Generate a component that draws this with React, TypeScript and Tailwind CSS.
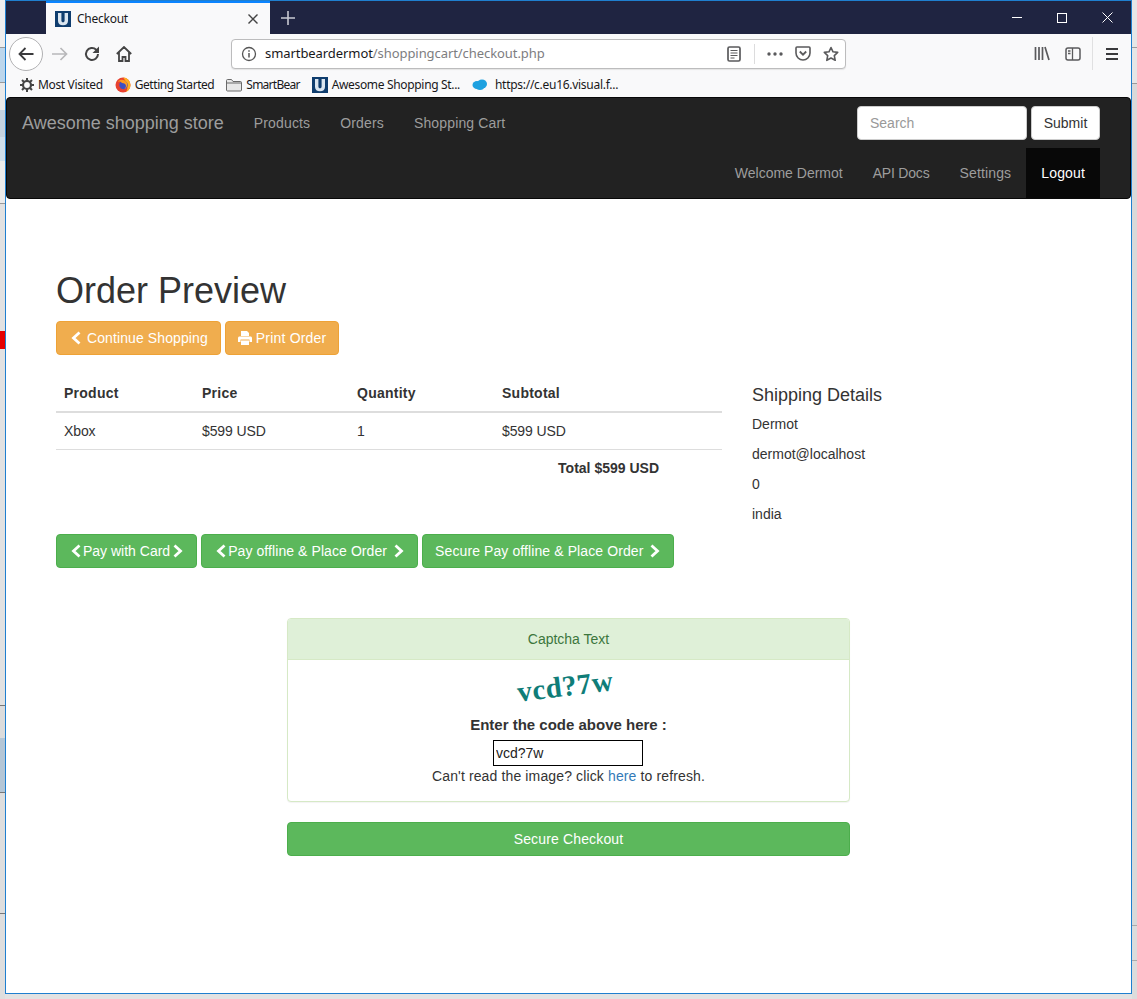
import type { ReactNode } from 'react';

const UI_FONT = 'font-["Noto_Sans",sans-serif]';

function Favicon() {
  return (
    <svg width="16" height="16" viewBox="0 0 16 16" className="shrink-0">
      <rect width="16" height="16" fill="#0f3d6e" />
      <path d="M3 2h3.4v7.5c0 1.2.6 1.8 1.6 1.8s1.6-.6 1.6-1.8V2H13v8c0 2.800-2 4.200-5 4.200S3 12.800 3 10z" fill="#dbe6f0" />
    </svg>
  );
}

function FirefoxIcon() {
  return (
    <svg width="16" height="16" viewBox="0 0 16 16" className="shrink-0">
      <circle cx="8" cy="8" r="7.500" fill="#e8412f" />
      <path d="M8 .5A7.500 7.500 0 0 1 15.500 8c0 3-2 6-4.500 7C14 11 12 5 8 .5z" fill="#ffb01f" />
      <circle cx="8.500" cy="8" r="4.200" fill="#3d4fc4" />
      <path d="M3 5c2-1 3 0 4 1 2 0 4 1 4 3s-2 4-5 4c3 0 7-2 6-7-1-3-5-4-7-3-1 .5-2 1-2 2z" fill="#ff9a1f" />
    </svg>
  );
}

function Chevron({ dir }: { dir: 'left' | 'right' }) {
  return (
    <svg width="14" height="14" viewBox="0 0 14 14" className="shrink-0">
      {dir === 'left' ? (
        <path d="M10.500 1.500 4.500 7l6 5.500" fill="none" stroke="#fff" strokeWidth="2.800" />
      ) : (
        <path d="M4.500 1.500 10.500 7l-6 5.500" fill="none" stroke="#fff" strokeWidth="2.800" />
      )}
    </svg>
  );
}

function PrinterIcon() {
  return (
    <svg width="14" height="14" viewBox="0 0 14 14" className="shrink-0">
      <path d="M3 0h6l2 2v3H3z" fill="#fff" />
      <path d="M1.500 5.500h11c.8 0 1.500.7 1.500 1.500v4h-2.500V8.500h-9V11H0V7c0-.8.7-1.500 1.500-1.500z" fill="#fff" />
      <rect x="3" y="9.500" width="8" height="4.500" fill="#fff" />
    </svg>
  );
}

function Btn({ color, children }: { color: 'orange' | 'green'; children: ReactNode }) {
  const tone =
    color === 'orange'
      ? 'bg-[#f0ad4e] border-[#eea236]'
      : 'bg-[#5cb85c] border-[#4cae4c]';
  return (
    <button className={`inline-flex h-[34px] items-center whitespace-nowrap rounded border px-3 text-sm text-white ${tone}`}>
      {children}
    </button>
  );
}

function Bookmark({ icon, label, className }: { icon: ReactNode; label: string; className: string }) {
  return (
    <div className="flex items-center gap-1 whitespace-nowrap">
      {icon}
      <span className={className}>{label}</span>
    </div>
  );
}

function Titlebar() {
  return (
    <div className="flex h-[33px] items-stretch bg-[#1f2441]">
      <div className="w-10" />
      <div className="flex w-[224px] items-center border-t-2 border-[#0a84ff] bg-[#f9f9fa] pl-[9px] pr-[11px] text-xs text-[#18181a]">
        <Favicon />
        <span className="ml-[6px] flex-1 tracking-[-0.25px]">Checkout</span>
        <svg width="12" height="12" viewBox="0 0 12 12">
          <path d="M1.500 1.500l9 9m0-9l-9 9" stroke="#444" strokeWidth="1.400" />
        </svg>
      </div>
      <div className="flex w-[35px] items-center justify-center">
        <svg width="14" height="14" viewBox="0 0 14 14">
          <path d="M7 0v14M0 7h14" stroke="#c8c9d2" strokeWidth="1.600" />
        </svg>
      </div>
      <div className="flex flex-1 items-center justify-end">
        <div className="flex w-[45px] justify-center">
          <div className="h-px w-[10px] bg-white" />
        </div>
        <div className="flex w-[45px] justify-center">
          <div className="size-[10px] border border-white" />
        </div>
        <div className="flex w-[47px] justify-center">
          <svg width="11" height="11" viewBox="0 0 11 11">
            <path d="M.5.5l10 10m0-10l-10 10" stroke="#fff" strokeWidth="1" />
          </svg>
        </div>
      </div>
    </div>
  );
}

function Toolbar() {
  return (
    <div className="flex h-[39px] items-center bg-[#f9f9fa] pl-[3px]">
      <div className="flex size-[34px] items-center justify-center rounded-full border border-[#b1b1b3] bg-white">
        <svg width="18" height="16" viewBox="0 0 18 16">
          <path d="M16.500 8H2.500M8.500 2l-6 6 6 6" fill="none" stroke="#3a3a3c" strokeWidth="1.800" />
        </svg>
      </div>
      <svg width="16" height="14" viewBox="0 0 16 14" className="ml-[9px]">
        <path d="M0 7h14M8.500 1l6 6-6 6" fill="none" stroke="#b8b8ba" strokeWidth="1.700" />
      </svg>
      <svg width="16" height="16" viewBox="0 0 16 16" className="ml-[16px]">
        <path d="M14 8a6 6 0 1 1-1.800-4.300L14 5.500" fill="none" stroke="#444" strokeWidth="2" />
        <path d="M15 .5V7H8.500z" fill="#444" />
      </svg>
      <svg width="16" height="16" viewBox="0 0 16 16" className="ml-[16px]">
        <path d="M.8 8 8 1l7.200 7M3 6.500V15h3.500v-4h3v4H13V6.500" fill="none" stroke="#444" strokeWidth="1.800" />
      </svg>
      <div className="ml-[99px] flex h-[30px] w-[615px] items-center rounded-sm border border-[#bcbcbd] bg-white pl-[9px] pr-[6px] shadow-[0_1px_1px_#e4e4e4]">
        <svg width="16" height="16" viewBox="0 0 16 16" className="shrink-0">
          <circle cx="8" cy="8" r="6.500" fill="none" stroke="#555" strokeWidth="1.300" />
          <path d="M8 7v4.500M8 4.200v1.500" stroke="#555" strokeWidth="1.500" />
        </svg>
        <div className="ml-[8px] flex-1 whitespace-nowrap text-[13px] tracking-[-0.07px]">
          <span className="text-[#18181a]">smartbeardermot</span>
          <span className="text-[#7d7d7f]">/shoppingcart/checkout.php</span>
        </div>
        <svg width="14" height="16" viewBox="0 0 14 16" className="shrink-0">
          <rect x="1" y="1" width="12" height="14" rx="1.500" fill="none" stroke="#5a5a5c" strokeWidth="1.700" />
          <path d="M3.500 4.500h7M3.500 7h7M3.500 9.500h7M3.500 12h4" stroke="#5a5a5c" strokeWidth="1" />
        </svg>
        <div className="ml-[13px] h-5 w-px bg-[#dcdcdd]" />
        <svg width="16" height="4" viewBox="0 0 16 4" className="ml-[12px] shrink-0">
          <circle cx="2" cy="2" r="1.700" fill="#5a5a5c" />
          <circle cx="8" cy="2" r="1.700" fill="#5a5a5c" />
          <circle cx="14" cy="2" r="1.700" fill="#5a5a5c" />
        </svg>
        <svg width="16" height="15" viewBox="0 0 16 15" className="ml-[12px] shrink-0">
          <path d="M2 1h12c.6 0 1 .4 1 1v5c0 4-3.300 7-7 7s-7-3-7-7V2c0-.6.4-1 1-1z" fill="none" stroke="#5a5a5c" strokeWidth="1.600" />
          <path d="M4.800 5.500 8 8.700l3.200-3.200" fill="none" stroke="#5a5a5c" strokeWidth="1.800" />
        </svg>
        <svg width="16" height="16" viewBox="0 0 16 16" className="ml-[12px] shrink-0">
          <path d="M8 1.500l2 4.300 4.700.6-3.400 3.200.9 4.700L8 12l-4.200 2.300.9-4.700L1.300 6.400 6 5.800z" fill="none" stroke="#5a5a5c" strokeWidth="1.600" strokeLinejoin="round" />
        </svg>
      </div>
      <svg width="16" height="15" viewBox="0 0 16 15" className="ml-[188px] shrink-0">
        <path d="M1.500 1v13M5 1v13M8.500 1v13M11 1l4 13" stroke="#5a5a5c" strokeWidth="1.700" />
      </svg>
      <svg width="16" height="14" viewBox="0 0 16 14" className="ml-[15px] shrink-0">
        <rect x="1" y="1" width="14" height="12" rx="2" fill="none" stroke="#5a5a5c" strokeWidth="1.500" />
        <path d="M7.500 1v12M3 4h2.500M3 6.500h2.500" stroke="#5a5a5c" strokeWidth="1.300" />
      </svg>
      <div className="ml-[11px] h-[33px] w-px bg-[#e0e0e1]" />
      <svg width="12" height="12" viewBox="0 0 12 12" className="ml-[13px] shrink-0">
        <path d="M0 1h12M0 6h12M0 11h12" stroke="#3a3a3c" strokeWidth="1.800" />
      </svg>
    </div>
  );
}

function BookmarksBar() {
  return (
    <div className="flex h-[24px] items-center gap-[12px] bg-[#f9f9fa] pl-[14px] text-xs text-[#18181a]">
      <Bookmark
        className="tracking-[-0.35px]"
        icon={
          <svg width="14" height="14" viewBox="0 0 14 14" className="shrink-0">
            <circle cx="7" cy="7" r="4" fill="none" stroke="#444" strokeWidth="2.200" />
            <path d="M7 0v3M7 11v3M0 7h3M11 7h3M2 2l2 2M10 10l2 2M12 2l-2 2M4 10l-2 2" stroke="#444" strokeWidth="2" />
          </svg>
        }
        label="Most Visited"
      />
      <Bookmark className="tracking-[-0.45px]" icon={<FirefoxIcon />} label="Getting Started" />
      <Bookmark
        className="tracking-[-0.75px]"
        icon={
          <svg width="16" height="14" viewBox="0 0 16 14" className="shrink-0">
            <path d="M.5 2.500c0-.6.4-1 1-1h4l1.500 2h7.500c.6 0 1 .4 1 1v7.500c0 .6-.4 1-1 1h-13c-.6 0-1-.4-1-1z" fill="#e8e8e8" stroke="#6a6a6a" />
            <path d="M.5 5h15" stroke="#6a6a6a" />
          </svg>
        }
        label="SmartBear"
      />
      <Bookmark className="tracking-[-0.33px]" icon={<Favicon />} label="Awesome Shopping St..." />
      <Bookmark
        className="ml-[3px] tracking-[-0.28px]"
        icon={
          <svg width="16" height="12" viewBox="0 0 16 12" className="shrink-0">
            <ellipse cx="5" cy="6" rx="4.500" ry="4" fill="#1ea1e0" />
            <ellipse cx="10" cy="5" rx="5" ry="4.500" fill="#1ea1e0" />
            <ellipse cx="8" cy="8" rx="4" ry="3" fill="#1ea1e0" />
          </svg>
        }
        label="https://c.eu16.visual.f..."
      />
    </div>
  );
}

function Navbar() {
  return (
    <nav className="rounded border border-[#080808] bg-[#222] text-sm text-[#9d9d9d]">
      <div className="flex h-[50px] items-center pl-[15px] pr-[30px]">
        <span className="text-lg">Awesome shopping store</span>
        <span className="ml-[30px] tracking-[0.15px]">Products</span>
        <span className="ml-[30px] tracking-[0.15px]">Orders</span>
        <span className="ml-[30px] tracking-[0.15px]">Shopping Cart</span>
        <div className="ml-auto flex gap-1">
          <input
            placeholder="Search"
            className="h-[34px] w-[170px] rounded border border-[#ccc] bg-white px-3 text-sm placeholder:text-[#999]"
          />
          <button className="h-[34px] w-[69px] rounded border border-[#ccc] bg-white text-sm text-[#333]">
            Submit
          </button>
        </div>
      </div>
      <div className="flex h-[50px] items-stretch justify-end pr-[30px]">
        <span className="flex items-center px-[15px]">Welcome Dermot</span>
        <span className="flex items-center px-[15px] tracking-[-0.2px]">API Docs</span>
        <span className="flex items-center px-[15px] tracking-[0.15px]">Settings</span>
        <span className="flex items-center bg-[#080808] px-[15px] tracking-[0.15px] text-white">Logout</span>
      </div>
    </nav>
  );
}

function OrderTable() {
  return (
    <table className="w-[666px] shrink-0 self-start table-fixed border-collapse">
      <colgroup>
        <col className="w-[138px]" />
        <col className="w-[155px]" />
        <col className="w-[145px]" />
        <col />
      </colgroup>
      <thead>
        <tr className="border-b-2 border-[#ddd] text-left tracking-[0.25px]">
          <th className="p-2 font-bold">Product</th>
          <th className="p-2 font-bold">Price</th>
          <th className="p-2 font-bold">Quantity</th>
          <th className="p-2 font-bold">Subtotal</th>
        </tr>
      </thead>
      <tbody>
        <tr className="border-b border-[#ddd] tracking-[-0.1px]">
          <td className="p-2">Xbox</td>
          <td className="p-2">$599 USD</td>
          <td className="p-2">1</td>
          <td className="p-2">$599 USD</td>
        </tr>
        <tr>
          <td colSpan={4} className="p-2 pr-[63px] text-right font-bold">
            Total $599 USD
          </td>
        </tr>
      </tbody>
    </table>
  );
}

function Captcha() {
  return (
    <div className="mx-auto mt-[50px] w-[563px] rounded border border-[#d6e9c6] bg-white text-center shadow-[0_1px_1px_rgba(0,0,0,0.05)]">
      <div className="flex h-[41px] items-center justify-center rounded-t-[3px] border-b border-[#d6e9c6] bg-[#dff0d8] text-[#3c763d]">
        Captcha Text
      </div>
      <div className="px-[15px] pb-[15px]">
        <div className="flex h-[55px] items-center justify-center">
          <span className="-translate-x-[3px] -translate-y-px -rotate-[7deg] font-['Liberation_Serif',serif] text-[29px] font-bold leading-none tracking-[0.5px] text-[#0f7d78]">
            vcd?7w
          </span>
        </div>
        <div className="text-[15px] leading-5 font-bold">Enter the code above here :</div>
        <input
          defaultValue="vcd?7w"
          className="ml-[190px] mt-[5px] block h-[26px] w-[150px] border border-black pl-0.5 text-sm text-[#222]"
        />
        <div className="tracking-[0.13px]">
          Can&apos;t read the image? click <span className="text-[#337ab7]">here</span> to refresh.
        </div>
      </div>
    </div>
  );
}

export default function App() {
  return (
    <div className="flex h-[999px] w-[1137px] overflow-hidden bg-[#e2e2e2]">
      {/* desktop peeking out on the left */}
      <div className="flex w-[5px] shrink-0 flex-col">
        <div className="h-[47px] bg-[#eeeeee]" />
        <div className="h-[36px] border-y border-[#9a9a9a] bg-[#bcd6ec]" />
        <div className="h-[27px] bg-[#eaeaea]" />
        <div className="h-[27px] bg-[#c5d3e0]" />
        <div className="h-[24px] bg-[#cfdfec]" />
        <div className="h-[42px] bg-[#ececec]" />
        <div className="h-[128px] border-t border-[#999] bg-[#e2e2e2]" />
        <div className="h-[18px] bg-[#e60000]" />
        <div className="h-[356px] bg-[#e2e2e2]" />
        <div className="h-[33px] border-t border-[#777] bg-[#dcdcdc]" />
        <div className="h-[54px] bg-[#b4c6d6]" />
        <div className="h-[121px] border-t border-[#777] bg-[#dedede]" />
        <div className="flex-1 border-t border-[#777] bg-[#dedede]" />
      </div>

      <div className="flex h-[994px] w-[1127px] shrink-0 flex-col border border-[#1f7fcf] bg-white font-['Liberation_Sans',sans-serif] text-sm text-[#333]">
        <div className={UI_FONT}>
          <Titlebar />
          <Toolbar />
          <BookmarksBar />
        </div>

        <Navbar />

        <main className="px-[50px]">
          <h1 className="mt-[72px] text-4xl leading-[40px] font-normal">Order Preview</h1>

          <div className="mt-[10px] flex gap-1">
            <Btn color="orange">
              <Chevron dir="left" />
              <span className="ml-1 tracking-[0.1px]">Continue Shopping</span>
            </Btn>
            <Btn color="orange">
              <PrinterIcon />
              <span className="ml-1 tracking-[0.2px]">Print Order</span>
            </Btn>
          </div>

          <div className="mt-5 flex">
            <OrderTable />
            <div className="ml-[30px] pt-[10px]">
              <h4 className="mb-[9px] text-lg leading-5 font-normal">Shipping Details</h4>
              <p className="mb-[10px] leading-5">Dermot</p>
              <p className="mb-[10px] leading-5">dermot@localhost</p>
              <p className="mb-[10px] leading-5">0</p>
              <p className="mb-[10px] leading-5">india</p>
            </div>
          </div>

          <div className="flex gap-1">
            <Btn color="green">
              <Chevron dir="left" />
              Pay with Card
              <Chevron dir="right" />
            </Btn>
            <Btn color="green">
              <Chevron dir="left" />
              <span className="tracking-[0.08px]">Pay offline &amp; Place Order</span>
              <span className="ml-1" />
              <Chevron dir="right" />
            </Btn>
            <Btn color="green">
              <span className="tracking-[0.1px]">Secure Pay offline &amp; Place Order</span>
              <span className="ml-1" />
              <Chevron dir="right" />
            </Btn>
          </div>

          <Captcha />

          <button className="mx-auto mt-5 block h-[34px] w-[563px] rounded border border-[#4cae4c] bg-[#5cb85c] text-sm tracking-[0.15px] text-white">
            Secure Checkout
          </button>
        </main>
      </div>

      {/* desktop peeking out on the right */}
      <div className="flex w-[5px] shrink-0 flex-col">
        <div className="h-[47px] bg-[#e6e6e6]" />
        <div className="h-[36px] border-t border-[#9a9a9a] bg-[#e6e6e6]" />
        <div className="h-[842px] border-t border-[#9a9a9a] bg-[#d9d9d9]" />
        <div className="h-[35px] border-t border-[#aaa] bg-[#dcdcdc]" />
        <div className="flex-1 border-t border-[#aaa] bg-[#dcdcdc]" />
      </div>
    </div>
  );
}
